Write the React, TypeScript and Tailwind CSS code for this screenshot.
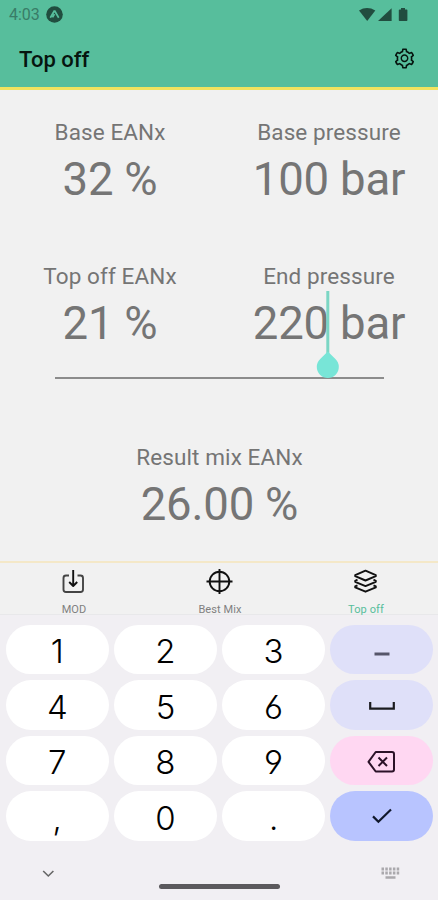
import type { ReactNode } from "react";
import { AiOutlineSetting } from "react-icons/ai";

type Key = { id: string; content: ReactNode; className: string };

const digitKey = "bg-white text-black";
const lavenderKey = "bg-[#dfe0f9] text-[#1b1b1f]";

const keys: Key[] = [
  { id: "1", content: "1", className: digitKey },
  { id: "2", content: "2", className: digitKey },
  { id: "3", content: "3", className: digitKey },
  { id: "dash", content: <DashIcon />, className: lavenderKey },
  { id: "4", content: "4", className: digitKey },
  { id: "5", content: "5", className: digitKey },
  { id: "6", content: "6", className: digitKey },
  { id: "space", content: <SpaceIcon />, className: lavenderKey },
  { id: "7", content: "7", className: digitKey },
  { id: "8", content: "8", className: digitKey },
  { id: "9", content: "9", className: digitKey },
  { id: "delete", content: <DeleteIcon />, className: "bg-[#ffd7f2] text-[#2b1228]" },
  { id: "comma", content: ",", className: digitKey },
  { id: "0", content: "0", className: digitKey },
  { id: "period", content: ".", className: digitKey },
  { id: "enter", content: <CheckIcon />, className: "bg-[#b8c4ff] text-[#10182c]" },
];

export default function App() {
  return (
    <div className="flex h-[900px] w-[438px] flex-col overflow-hidden bg-[#f1f1f1] font-['Roboto',sans-serif]">
      <Header />
      <main className="h-[471px] shrink-0 pt-[27px] text-[#757575]">
        <div className="grid h-36 grid-cols-2">
          <Field label="Base EANx" value="32 %" />
          <Field label="Base pressure" value="100 bar" />
        </div>
        <div className="grid h-36 grid-cols-2">
          <Field label="Top off EANx" value="21 %" />
          <Field label="End pressure" value="220 bar" active />
        </div>
        <div className="-mt-[28px] ml-[55px] h-[1.5px] w-[329px] bg-[#8c8c8c]" />
        <div className="mt-[63px]">
          <Field label="Result mix EANx" value="26.00 %" />
        </div>
      </main>
      <TabBar />
      <Keyboard />
    </div>
  );
}

function Header() {
  return (
    <header className="h-[90px] shrink-0 border-b-[3px] border-[#f1e35f] bg-[#57be9c]">
      <div className="flex h-[29px] items-center justify-between pl-[9px] pr-[30px] text-[#214d3f]">
        <div className="flex items-center gap-1.5">
          <span className="w-[31px] text-[16px] leading-none text-[#397c67]">4:03</span>
          <svg width="17" height="17" viewBox="0 0 17 17">
            <circle cx="8.5" cy="8.5" r="8.3" fill="currentColor" />
            <path d="M4.3 11.7 8.1 5.2h.8l3.8 6.5M8.5 8.1l-2 3.3" fill="none" stroke="#57be9c" strokeWidth="1.7" />
          </svg>
        </div>
        <svg width="49" height="16" viewBox="0 0 49 16" fill="currentColor">
          <path d="M0 3.4Q8 -1.5 16.3 3.4L8.2 14Z" />
          <path d="M19 14 32.6 1.3V14Z" />
          <path d="M40 2.4h2V1h4v1.4h1.7q.7 0 .7.8v10q0 .8-.8.8h-7q-.8 0-.8-.8v-10q0-.8.9-.8Z" />
        </svg>
      </div>
      <div className="flex h-[58px] items-center justify-between pl-[19px] pr-[22px] text-[#06150f]">
        <h1 className="pt-[4px] text-[22px] font-medium leading-none">Top off</h1>
        <AiOutlineSetting size={23} />
      </div>
    </header>
  );
}

function Field({ label, value, active }: { label: string; value: string; active?: boolean }) {
  return (
    <div className="relative pl-px text-center whitespace-nowrap">
      <p className="text-[22.5px] leading-[30px] tracking-[0.1px]">{label}</p>
      <p className="pt-[5px] text-[45.5px] leading-[56px] tracking-[-0.2px]">{value}</p>
      {active && (
        <svg className="absolute left-[97px] top-[30px]" width="24" height="88" viewBox="0 0 24 88">
          <path d="M11.8 0V63" stroke="#7bd6c4" strokeWidth="3" />
          <path d="M11.8 60.5 19.4 68a11 11 0 1 1-15.2 0Z" fill="#78e5d7" />
        </svg>
      )}
    </div>
  );
}

function TabBar() {
  return (
    <nav className="grid h-[54px] shrink-0 grid-cols-3 border-t-2 border-b border-t-[#f4e8c8] border-b-[#e8e8ea] text-[#111]">
      <Tab label="MOD">
        <path d="M8 6.5H5Q2.500 6.500 2.500 9v11.500Q2.500 23 5 23h14.500q2.500 0 2.500-2.500V9q0-2.500-2.500-2.500h-3" stroke="#444" />
        <path d="M12.2 1v16M8.200 13l4 4 4-4" />
      </Tab>
      <Tab label="Best Mix">
        <circle cx="12.5" cy="12.5" r="9.8" />
        <path d="M12.5 0v25M-.5 12.5h26" />
      </Tab>
      <Tab label="Top off" active>
        <path d="M12.5 1.7 22.8 6.2V7.2L12.5 11.5 2.200 7.200V6.200Z" />
        <path d="m4.5 10.700-2.300 1.100v1l10.300 4.300 10.300-4.300v-1l-2.300-1.100" />
        <path d="m4.5 16.300-2.300 1.100v1l10.300 4.300 10.300-4.300v-1l-2.300-1.100" />
      </Tab>
    </nav>
  );
}

function Tab({ label, active, children }: { label: string; active?: boolean; children: ReactNode }) {
  return (
    <div className="flex flex-col items-center pt-[6px]">
      <svg width="27" height="26" viewBox="-1 0 27 26" fill="none" stroke="currentColor" strokeWidth="1.9" strokeLinejoin="round">
        {children}
      </svg>
      <span className={`pt-[8px] pl-[2px] text-[11px] leading-[14px] tracking-[0.1px] ${active ? "text-[#57be9c]" : "text-[#808080]"}`}>{label}</span>
    </div>
  );
}

function Keyboard() {
  return (
    <section className="flex-1 bg-[#f1eff3] pt-[10px]">
      <div className="grid grid-cols-4 gap-x-[5.6px] gap-y-[6.2px] pr-[5px] pl-[6px]">
        {keys.map((key) => (
          <div
            key={key.id}
            className={`flex h-[49.3px] items-center justify-center rounded-full pt-[4px] font-['Inter',sans-serif] text-[33px] font-light leading-none [font-feature-settings:'cv03','cv04'] ${key.className}`}
          >
            {key.content}
          </div>
        ))}
      </div>
      <div className="flex items-start justify-between pt-[26px] pr-[38px] pl-[42px]">
        <svg className="mt-[2px]" width="13" height="10" viewBox="0 0 13 10" fill="none" stroke="#666" strokeWidth="1.6">
          <path d="m1.2 2 5.1 5 5.1-5" />
        </svg>
        <div className="mt-[17px] ml-[3px] h-[5px] w-[121px] rounded-full bg-[#5b595d]" />
        <svg width="19" height="13" viewBox="0 0 19 13" fill="none" stroke="#aaa8ac" strokeWidth="3">
          <path d="M.5 2H19M.5 6H19" strokeDasharray="2.5 1.3" />
          <path d="M4.5 10.5h10" strokeWidth="2.5" />
        </svg>
      </div>
    </section>
  );
}

function DashIcon() {
  return (
    <svg className="mt-[4px]" width="16" height="4" viewBox="0 0 16 4">
      <path d="M.5 2h15" stroke="#56566a" strokeWidth="3" />
    </svg>
  );
}

function SpaceIcon() {
  return (
    <svg width="26" height="10" viewBox="0 0 26 10" fill="none" stroke="currentColor" strokeWidth="2.2">
      <path d="M1.2 0v6.6h23.6V0" />
    </svg>
  );
}

function DeleteIcon() {
  return (
    <svg className="-mt-px" width="29" height="24" viewBox="0 0 29 24" fill="none" stroke="currentColor" strokeWidth="2">
      <path d="M8.7 2H25q2 0 2 2v15.5q0 2-2 2H8.7L1.5 11.8Z" strokeLinejoin="round" />
      <path d="m11.5 7.5 8.5 8.5m0-8.5L11.5 16" />
    </svg>
  );
}

function CheckIcon() {
  return (
    <svg className="-mt-[3px]" width="20" height="17" viewBox="0 0 20 17" fill="none" stroke="currentColor" strokeWidth="2.2">
      <path d="m1 8.4 5.4 5.3L19 1.5" />
    </svg>
  );
}
